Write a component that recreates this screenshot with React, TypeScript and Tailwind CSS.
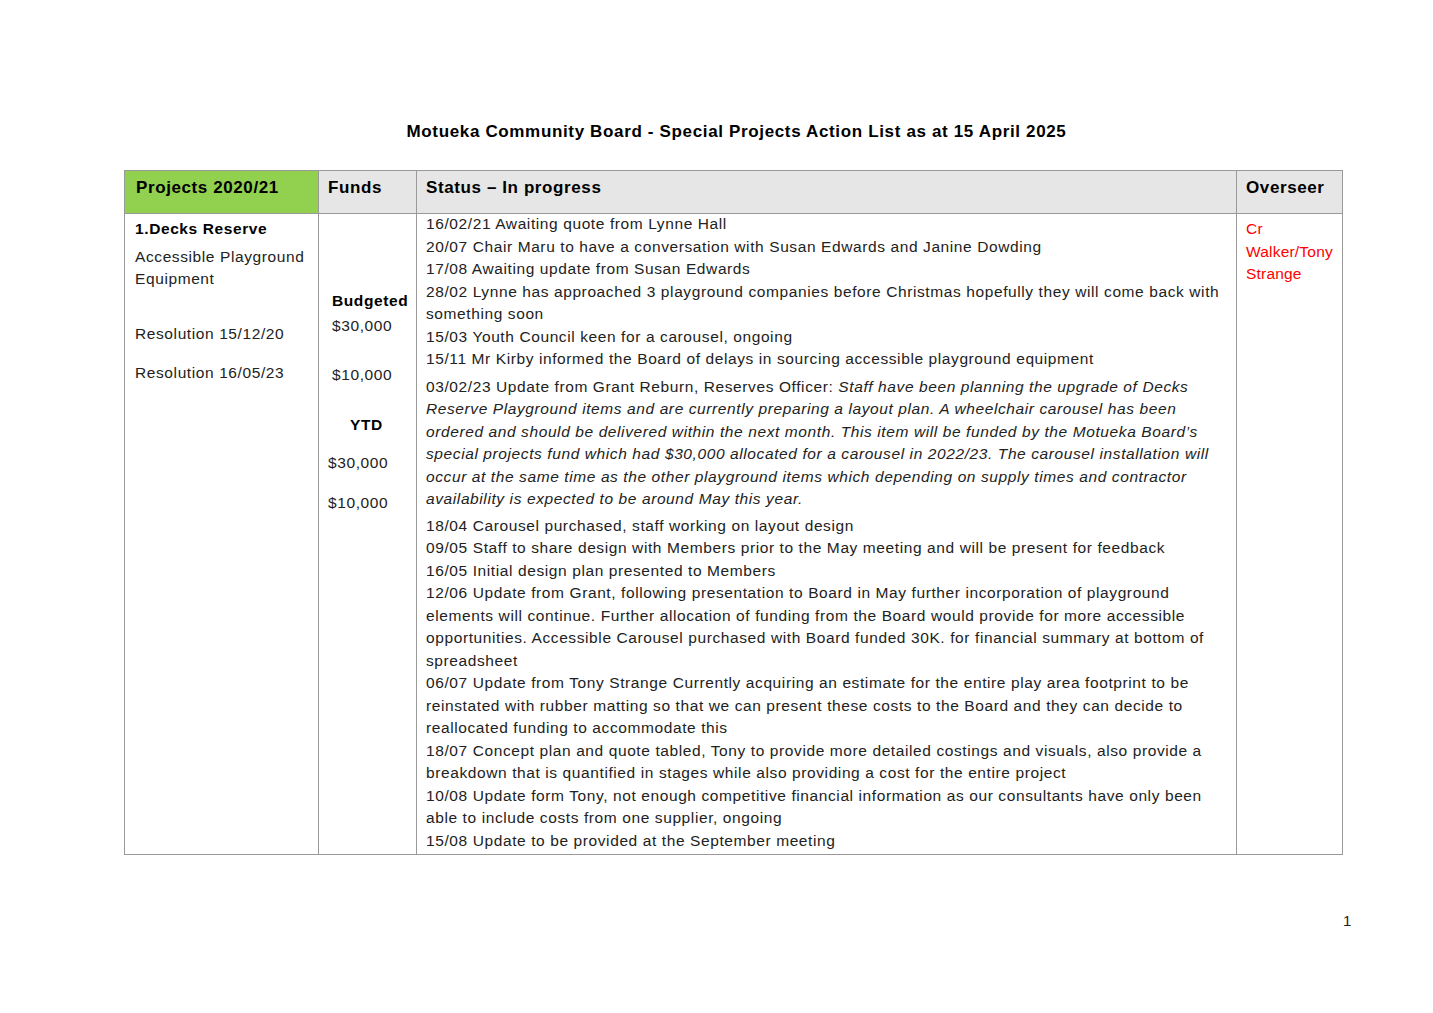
export default function App() {
  const L = (t: string, i?: boolean) => (
    <div className={"whitespace-nowrap h-[22.5px] " + (i ? "italic" : "")}>{t}</div>
  );
  return (
    <div className="w-[1433px] h-[1013px] bg-white relative text-[#222] text-[15.5px] leading-[22.5px] tracking-[0.6px]" style={{ fontFamily: '"Liberation Sans", Arial, sans-serif' }}>
      <div className="pt-[120px] text-center font-bold text-[17px] leading-[24px] text-black pl-[40px] tracking-[0.65px]">
        Motueka Community Board - Special Projects Action List as at 15 April 2025
      </div>
      <div className="ml-[124px] mt-[26px] w-[1219px] border border-[#999] flex flex-col">
        <div className="flex h-[43px] text-[17px] font-bold text-black border-b border-[#999] tracking-[0.6px]">
          <div className="w-[194px] bg-[#92d050] px-[11px] pt-[6px] border-r border-[#999]">Projects 2020/21</div>
          <div className="w-[98px] bg-[#e6e6e6] px-[9px] pt-[6px] border-r border-[#999]">Funds</div>
          <div className="w-[820px] bg-[#e6e6e6] px-[9px] pt-[6px] border-r border-[#999]">Status – In progress</div>
          <div className="flex-1 bg-[#e6e6e6] px-[9px] pt-[6px]">Overseer</div>
        </div>
        <div className="flex h-[640px]">
          <div className="w-[194px] px-[10px] pt-[4px] border-r border-[#999]">
            <div className="font-bold text-black">1.Decks Reserve</div>
            <div className="mt-[5px]">Accessible Playground</div>
            <div>Equipment</div>
            <div className="mt-[32px]">Resolution 15/12/20</div>
            <div className="mt-[17px]">Resolution 16/05/23</div>
          </div>
          <div className="w-[98px] pl-[9px] pt-[76px] border-r border-[#999]">
            <div className="font-bold text-black ml-[4px]">Budgeted</div>
            <div className="mt-[2px] ml-[4px]">$30,000</div>
            <div className="mt-[27px] ml-[4px]">$10,000</div>
            <div className="mt-[27px] ml-[22px] font-bold text-black">YTD</div>
            <div className="mt-[16px]">$30,000</div>
            <div className="mt-[17px]">$10,000</div>
          </div>
          <div className="w-[820px] px-[9px] -mt-[1px] border-r border-[#999]">
            {L("16/02/21 Awaiting quote from Lynne Hall")}
            {L("20/07 Chair Maru to have a conversation with Susan Edwards and Janine Dowding")}
            {L("17/08 Awaiting update from Susan Edwards")}
            {L("28/02 Lynne has approached 3 playground companies before Christmas hopefully they will come back with")}
            {L("something soon")}
            {L("15/03 Youth Council keen for a carousel, ongoing")}
            {L("15/11 Mr Kirby informed the Board of delays in sourcing accessible playground equipment")}
            <div className="mt-[5px]">
              <div className="whitespace-nowrap h-[22.5px]">03/02/23 Update from Grant Reburn, Reserves Officer: <i>Staff have been planning the upgrade of Decks</i></div>
              {L("Reserve Playground items and are currently preparing a layout plan.  A wheelchair carousel has been", true)}
              {L("ordered and should be delivered within the next month.  This item will be funded by the Motueka Board’s", true)}
              {L("special projects fund which had $30,000 allocated for a carousel in 2022/23.  The carousel installation will", true)}
              {L("occur at the same time as the other playground items which depending on supply times and contractor", true)}
              {L("availability is expected to be around May this year.", true)}
            </div>
            <div className="mt-[4px]">
              {L("18/04 Carousel purchased, staff working on layout design")}
              {L("09/05 Staff to share design with Members prior to the May meeting and will be present for feedback")}
              {L("16/05 Initial design plan presented to Members")}
              {L("12/06 Update from Grant, following presentation to Board in May further incorporation of playground")}
              {L("elements will continue. Further allocation of funding from the Board would provide for more accessible")}
              {L("opportunities. Accessible Carousel purchased with Board funded 30K. for financial summary at bottom of")}
              {L("spreadsheet")}
              {L("06/07 Update from Tony Strange Currently acquiring an estimate for the entire play area footprint to be")}
              {L("reinstated with rubber matting so that we can present these costs to the Board and they can decide to")}
              {L("reallocated funding to accommodate this")}
              {L("18/07 Concept plan and quote tabled, Tony to provide more detailed costings and visuals, also provide a")}
              {L("breakdown that is quantified in stages while also providing a cost for the entire project")}
              {L("10/08 Update form Tony, not enough competitive financial information as our consultants have only been")}
              {L("able to include costs from one supplier, ongoing")}
              {L("15/08 Update to be provided at the September meeting")}
            </div>
          </div>
          <div className="flex-1 px-[9px] pt-[4px] text-[#ff0000] tracking-[0.2px]">
            <div>Cr</div>
            <div>Walker/Tony</div>
            <div>Strange</div>
          </div>
        </div>
      </div>
      <div className="absolute left-[1343px] top-[910px] text-[15px]">1</div>
    </div>
  );
}
